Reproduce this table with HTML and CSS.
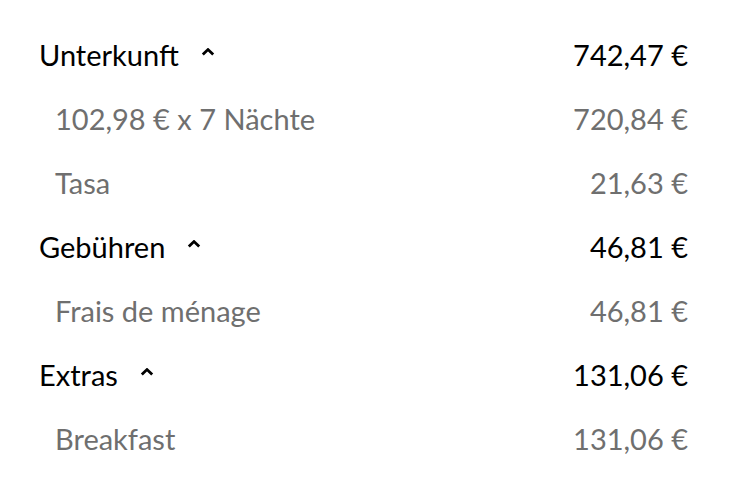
FILE: index.html
```html
<!DOCTYPE html>
<html lang="de">
<head>
<meta charset="utf-8">
<link rel="stylesheet" href="styles.css">
</head>
<body>
<div class="summary">
  <div class="row head"><span class="label">Unterkunft <svg class="chev" viewBox="0 0 14 8" width="14" height="8"><path d="M1.8 6.6 L7 1.6 L12.2 6.6" fill="none" stroke="#000" stroke-width="2.8"/></svg></span><span class="amt">742,47 €</span></div>
  <div class="row sub"><span class="label">102,98 € x 7 Nächte</span><span class="amt">720,84 €</span></div>
  <div class="row sub"><span class="label">Tasa</span><span class="amt">21,63 €</span></div>
  <div class="row head"><span class="label">Gebühren <svg class="chev" viewBox="0 0 14 8" width="14" height="8"><path d="M1.8 6.6 L7 1.6 L12.2 6.6" fill="none" stroke="#000" stroke-width="2.8"/></svg></span><span class="amt">46,81 €</span></div>
  <div class="row sub"><span class="label">Frais de ménage</span><span class="amt">46,81 €</span></div>
  <div class="row head"><span class="label">Extras <svg class="chev" viewBox="0 0 14 8" width="14" height="8"><path d="M1.8 6.6 L7 1.6 L12.2 6.6" fill="none" stroke="#000" stroke-width="2.8"/></svg></span><span class="amt">131,06 €</span></div>
  <div class="row sub"><span class="label">Breakfast</span><span class="amt">131,06 €</span></div>
</div>
</body>
</html>
```
FILE: styles.css
```css
html, body { margin: 0; background: #fff; }
body { font-family: Lato, "Noto Sans", sans-serif; }
.summary { padding: 22px 46px 0 39px; }
.row { height: 64px; display: flex; align-items: center; justify-content: space-between; font-size: 29px; }
.head { color: #000; }
.sub { color: #6f6f6f; padding-left: 16px; }
.label { display: flex; align-items: center; }
.chev { margin-left: 22px; margin-top: -4px; }
```
